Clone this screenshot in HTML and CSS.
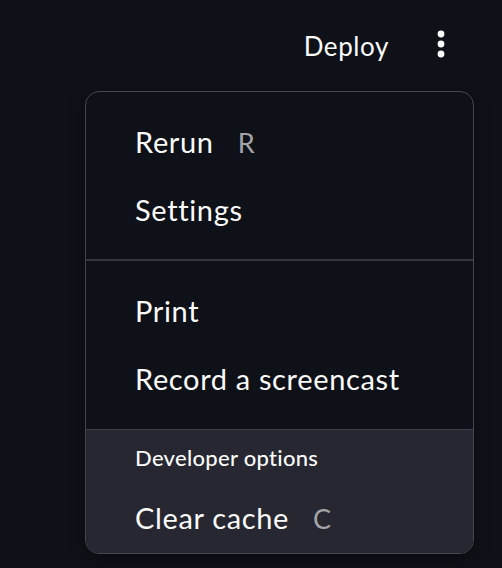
FILE: index.html
```html
<!DOCTYPE html>
<html lang="en">
<head>
<meta charset="utf-8">
<title>Menu</title>
<link rel="stylesheet" href="styles.css">
</head>
<body>
<header class="toolbar">
  <span class="deploy">Deploy</span>
  <button class="kebab" aria-label="Main menu">
    <svg width="8" height="28" viewBox="0 0 8 28"><circle cx="4" cy="4" r="3.4"/><circle cx="4" cy="14" r="3.4"/><circle cx="4" cy="24" r="3.4"/></svg>
  </button>
</header>
<nav class="menu">
  <ul class="section">
    <li class="item">Rerun<span class="key">R</span></li>
    <li class="item">Settings</li>
  </ul>
  <ul class="section bordered">
    <li class="item">Print</li>
    <li class="item">Record a screencast</li>
  </ul>
  <div class="dev">
    <div class="dev-title">Developer options</div>
    <div class="item">Clear cache<span class="key">C</span></div>
  </div>
</nav>
</body>
</html>
```
FILE: styles.css
```css
* { box-sizing: border-box; }
html, body {
  margin: 0;
  padding: 0;
  background: #0e1117;
  height: 100%;
}
body {
  font-family: Lato, "Noto Sans", sans-serif;
  color: #fafafa;
  position: relative;
  overflow: hidden;
}
.toolbar {
  display: flex;
  justify-content: flex-end;
  align-items: center;
  height: 96px;
  padding-right: 57px;
  padding-bottom: 1px;
}
.deploy {
  font-size: 26px;
  line-height: 30px;
  letter-spacing: 0.6px;
  margin-right: 48px;
  margin-top: -4px;
}
.kebab {
  background: none;
  border: 0;
  padding: 0;
  display: flex;
  fill: #fafafa;
  margin-top: -8px;
}
.menu {
  position: absolute;
  left: 85px;
  top: 91px;
  width: 389px;
  border: 1px solid #44464e;
  border-radius: 14px;
  background: #0e1117;
  overflow: hidden;
  box-shadow: 0 4px 16px rgba(0, 0, 0, 0.35);
}
.section {
  list-style: none;
  margin: 0;
  padding: 16px 0 15px;
}
.bordered {
  border-top: 2px solid #33363d;
  padding-top: 16px;
  padding-bottom: 16px;
}
.item {
  display: flex;
  align-items: baseline;
  height: 68px;
  line-height: 68px;
  padding-left: 49px;
  font-size: 29px;
  letter-spacing: 0.65px;
}
.key {
  margin-left: 24px;
  font-size: 27px;
  color: #a3a4a8;
}
.dev {
  background: #262730;
  border-top: 1px solid #3d3f47;
  padding-bottom: 1px;
}
.dev-title {
  font-size: 22px;
  line-height: 26px;
  letter-spacing: 0.3px;
  padding: 15px 0 13px 49px;
  font-weight: 500;
}
```
